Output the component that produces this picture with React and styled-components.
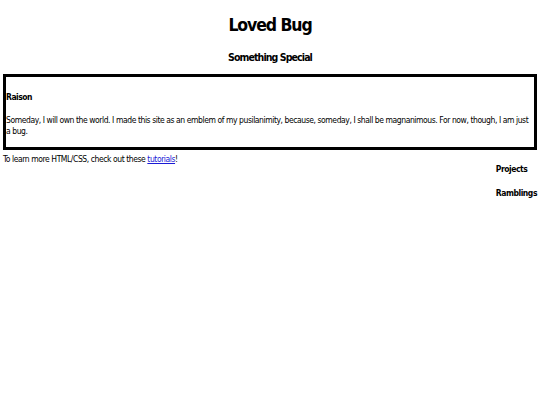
import styled, { createGlobalStyle } from "styled-components";

const GlobalStyle = createGlobalStyle`
  html, body {
    margin: 0;
    padding: 0;
    background: #fff;
  }
  body {
    padding: 0 3px;
    color: #000;
    font-family: "DejaVu Sans Condensed", "DejaVu Sans", sans-serif;
    font-stretch: condensed;
  }
`;

const App = () => (
  <>
    <GlobalStyle />
    <Header>
      <Title>Loved Bug</Title>
      <Subtitle>Something Special</Subtitle>
    </Header>
    <Box>
      <BoxTitle>Raison</BoxTitle>
      <Text>
        Someday, I will own the world. I made this site as an emblem of my
        pusilanimity, because, someday, I shall be magnanimous. For now,
        though, I am just a bug.
      </Text>
    </Box>
    <Footer>
      <Text>
        To learn more HTML/CSS, check out these <Link href="#">tutorials</Link>!
      </Text>
      <Aside>
        <NavItem>Projects</NavItem>
        <NavItem>Ramblings</NavItem>
      </Aside>
    </Footer>
  </>
);

const Header = styled.header`
  display: flex;
  flex-direction: column;
  align-items: center;
  padding-top: 14px;
`;

const Title = styled.h1`
  margin: 0;
  font-size: 17.5px;
  letter-spacing: -1.1px;
  line-height: 22px;
  font-weight: bold;
`;

const Subtitle = styled.h2`
  margin: 14px 0 0;
  font-size: 10.5px;
  letter-spacing: -0.9px;
  line-height: 14px;
  font-weight: bold;
`;

const Box = styled.section`
  margin-top: 10px;
  border: 3px solid #000;
  padding: 14px 0 10px;
`;

const BoxTitle = styled.h3`
  margin: 0 0 12px;
  font-size: 8.5px;
  letter-spacing: -0.5px;
  line-height: 12px;
  font-weight: bold;
`;

const Text = styled.p`
  margin: 0;
  font-size: 8.5px;
  letter-spacing: -0.43px;
  line-height: 11px;
`;

const Link = styled.a`
  color: #1a1ad6;
  text-decoration: underline;
`;

const Footer = styled.div`
  display: flex;
  justify-content: space-between;
  align-items: flex-start;
  padding-top: 4px;
`;

const Aside = styled.nav`
  display: flex;
  flex-direction: column;
  gap: 13px;
  padding-top: 10px;
`;

const NavItem = styled.div`
  font-size: 8.5px;
  letter-spacing: -0.45px;
  line-height: 11px;
  font-weight: bold;
  white-space: nowrap;
`;

export default App;
